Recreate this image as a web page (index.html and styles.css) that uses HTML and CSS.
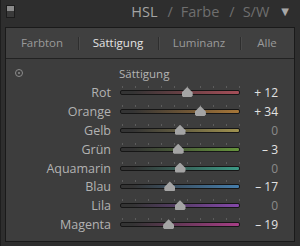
FILE: index.html
```html
<!DOCTYPE html>
<html lang="de">
<head>
<meta charset="utf-8">
<link rel="stylesheet" href="styles.css">
</head>
<body>
<div class="app">
  <div class="header">
    <div class="toggle"><span class="toggle-top"></span></div>
    <div class="titles">
      <span class="title active">HSL</span>
      <span class="slash">/</span>
      <span class="title">Farbe</span>
      <span class="slash">/</span>
      <span class="title">S/W</span>
      <span class="caret">▼</span>
    </div>
  </div>
  <div class="panel">
    <div class="tabs">
      <div class="tab">Farbton</div>
      <div class="tab sep selected">Sättigung</div>
      <div class="tab sep">Luminanz</div>
      <div class="tab sep">Alle</div>
    </div>
    <div class="body">
      <div class="section">
        <span class="target"></span>
        <span class="section-title">Sättigung</span>
      </div>
      <div class="rows">
        <div class="row">
          <span class="label">Rot</span>
          <div class="slider"><div class="ticks"></div><div class="track c-red"></div><span class="thumb" style="left:67.2px"></span></div>
          <span class="value on">+ 12</span>
        </div>
        <div class="row">
          <span class="label">Orange</span>
          <div class="slider"><div class="ticks"></div><div class="track c-orange"></div><span class="thumb" style="left:80.4px"></span></div>
          <span class="value on">+ 34</span>
        </div>
        <div class="row">
          <span class="label">Gelb</span>
          <div class="slider"><div class="ticks"></div><div class="track c-yellow"></div><span class="thumb" style="left:60px"></span></div>
          <span class="value">0</span>
        </div>
        <div class="row">
          <span class="label">Grün</span>
          <div class="slider"><div class="ticks"></div><div class="track c-green"></div><span class="thumb" style="left:58.2px"></span></div>
          <span class="value on">– 3</span>
        </div>
        <div class="row">
          <span class="label">Aquamarin</span>
          <div class="slider"><div class="ticks"></div><div class="track c-aqua"></div><span class="thumb" style="left:60px"></span></div>
          <span class="value">0</span>
        </div>
        <div class="row">
          <span class="label">Blau</span>
          <div class="slider"><div class="ticks"></div><div class="track c-blue"></div><span class="thumb" style="left:49.8px"></span></div>
          <span class="value on">– 17</span>
        </div>
        <div class="row">
          <span class="label">Lila</span>
          <div class="slider"><div class="ticks"></div><div class="track c-purple"></div><span class="thumb" style="left:60px"></span></div>
          <span class="value">0</span>
        </div>
        <div class="row">
          <span class="label">Magenta</span>
          <div class="slider"><div class="ticks"></div><div class="track c-magenta"></div><span class="thumb" style="left:48.6px"></span></div>
          <span class="value on">– 19</span>
        </div>
      </div>
    </div>
  </div>
</div>
</body>
</html>
```
FILE: styles.css
```css
html, body {
  margin: 0;
  padding: 0;
  background: #2c2c2c;
}
body {
  width: 300px;
  height: 246px;
  overflow: hidden;
  font-family: "Open Sans", "DejaVu Sans", sans-serif;
  font-size: 11px;
}
.app {
  width: 300px;
  height: 246px;
  background: #2e2e2e;
  border-left: 1px solid #1e1e1e;
  box-sizing: border-box;
}
.header {
  height: 27px;
  display: flex;
  align-items: center;
  padding: 0 11px 0 5px;
  box-sizing: border-box;
}
.toggle {
  width: 9px;
  height: 13px;
  background: #3a3a3a;
  border: 1px solid #1c1c1c;
  box-sizing: border-box;
  margin-top: -5px;
  display: flex;
  flex-direction: column;
}
.toggle-top {
  height: 5px;
  background: #8a8a8a;
}
.titles {
  margin-left: auto;
  display: flex;
  align-items: center;
  color: #6e6e6e;
  font-size: 14.5px;
  margin-top: -4px;
}
.title.active {
  color: #a4a4a4;
}
.slash {
  margin: 0 8px 0 10px;
}
.caret {
  font-size: 10px;
  color: #a8a8a8;
  margin-left: 12px;
  font-family: "DejaVu Sans", sans-serif;
}
.panel {
  margin: 0 5px 0 4px;
  height: 215px;
  border: 1px solid #1a1a1a;
  background: #3d3d3d;
  box-sizing: border-box;
}
.tabs {
  height: 30px;
  display: grid;
  grid-template-columns: 72px 80px 82px 1fr;
  align-items: center;
  background: #404040;
  border-bottom: 1px solid #222;
  color: #9a9a9a;
  font-size: 11.5px;
}
.tab {
  text-align: center;
  position: relative;
  line-height: 28px;
}
.tab.sep::before {
  content: "";
  position: absolute;
  left: 0;
  top: 8px;
  height: 13px;
  width: 1px;
  background: #2e2e2e;
  box-shadow: 1px 0 0 #4a4a4a;
}
.tab.selected {
  color: #e4e4e4;
}
.body {
  padding-top: 6px;
}
.section {
  display: flex;
  align-items: center;
  height: 16px;
  color: #b4b4b4;
  font-size: 11.5px;
}
.target {
  width: 8px;
  height: 8px;
  border: 1px solid #8c8c8c;
  border-radius: 50%;
  margin-left: 9px;
  position: relative;
  box-sizing: border-box;
}
.target::after {
  content: "";
  position: absolute;
  left: 2px;
  top: 2px;
  width: 2px;
  height: 2px;
  background: #8c8c8c;
  border-radius: 50%;
}
.section-title {
  margin-left: 96px;
}
.rows {
  margin-top: 2px;
}
.row {
  display: grid;
  grid-template-columns: 105px 120px 29px;
  column-gap: 9px;
  height: 18.9px;
  align-items: center;
}
.label {
  text-align: right;
  color: #b2b2b2;
  font-size: 12.5px;
}
.slider {
  position: relative;
  height: 19px;
}
.ticks {
  position: absolute;
  left: 2px;
  right: 0;
  top: 3px;
  height: 2px;
  background: repeating-linear-gradient(to right, #5c5c5c 0 1px, transparent 1px 13px);
}
.track {
  position: absolute;
  left: 0;
  right: 0;
  top: 7px;
  height: 3px;
  border-radius: 2px;
  border: 1px solid #161616;
  box-sizing: content-box;
}
.thumb {
  position: absolute;
  top: 4px;
  width: 11px;
  height: 10px;
  margin-left: -5.5px;
  background: #a4a4a4;
  clip-path: polygon(50% 0, 100% 55%, 100% 85%, 88% 100%, 12% 100%, 0 85%, 0 55%);
}
.value {
  text-align: right;
  color: #8a8a8a;
  font-size: 12px;
}
.value.on {
  color: #e2e2e2;
}
.c-red { background: linear-gradient(to right, #343434 10%, #a54e58); }
.c-orange { background: linear-gradient(to right, #343434 10%, #a67638); }
.c-yellow { background: linear-gradient(to right, #343434 10%, #a09250); }
.c-green { background: linear-gradient(to right, #343434 10%, #66943c); }
.c-aqua { background: linear-gradient(to right, #343434 10%, #3c9a86); }
.c-blue { background: linear-gradient(to right, #343434 10%, #467eac); }
.c-purple { background: linear-gradient(to right, #343434 10%, #8448aa); }
.c-magenta { background: linear-gradient(to right, #343434 10%, #a63e86); }
```
